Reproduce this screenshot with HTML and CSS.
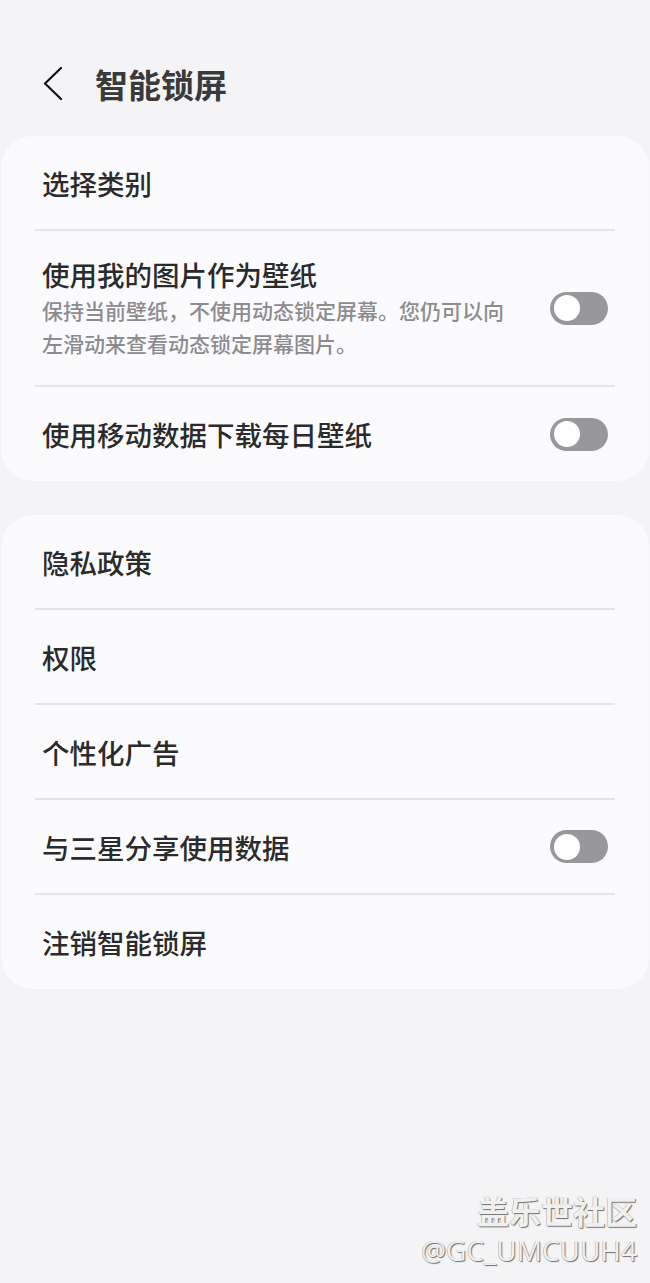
FILE: index.html
```html
<!DOCTYPE html>
<html lang="zh-CN">
<head>
  <meta charset="UTF-8">
  <meta name="viewport" content="width=device-width, initial-scale=1.0">
  <title>智能锁屏</title>
  <link rel="stylesheet" href="styles.css">
</head>
<body>

  <div class="header">
    <svg class="back" width="20" height="34" viewBox="0 0 20 34">
      <polyline points="18,1 2,16.5 18,32" fill="none" stroke="#111" stroke-width="2.2" stroke-linecap="round" stroke-linejoin="round"/>
    </svg>
    <h1>智能锁屏</h1>
  </div>

  <div class="card">
    <div class="row">
      <span class="label">选择类别</span>
    </div>
    <div class="row tall">
      <div class="text">
        <span class="label">使用我的图片作为壁纸</span>
        <p class="sub">保持当前壁纸，不使用动态锁定屏幕。您仍可以向左滑动来查看动态锁定屏幕图片。</p>
      </div>
      <div class="toggle"><span class="knob"></span></div>
    </div>
    <div class="row last">
      <span class="label">使用移动数据下载每日壁纸</span>
      <div class="toggle"><span class="knob"></span></div>
    </div>
  </div>

  <div class="card">
    <div class="row"><span class="label">隐私政策</span></div>
    <div class="row"><span class="label">权限</span></div>
    <div class="row"><span class="label">个性化广告</span></div>
    <div class="row">
      <span class="label">与三星分享使用数据</span>
      <div class="toggle"><span class="knob"></span></div>
    </div>
    <div class="row last"><span class="label">注销智能锁屏</span></div>
  </div>

  <div class="watermark">
    <div class="wm-title">盖乐世社区</div>
    <div class="wm-user">@GC_UMCUUH4</div>
  </div>

</body>
</html>
```
FILE: styles.css
```css
body {
  margin: 0;
  height: 1283px;
  position: relative;
  overflow: hidden;
  background-color: #f4f4f7;
  font-family: "Noto Sans CJK SC", "Noto Sans", sans-serif;
  color: #2b2b2b;
}
.header {
  height: 136px;
  display: flex;
  align-items: center;
  padding: 32px 0 0 43px;
  box-sizing: border-box;
}
.back {
  display: block;
}
h1 {
  margin: 0 0 0 32px;
  font-size: 33px;
  font-weight: 700;
  color: #3a3a3a;
  line-height: 1;
}
.card {
  background-color: #fbfbfd;
  border-radius: 32px;
  padding: 0 34px;
  margin: 0 1px 34px;
}
.row {
  display: flex;
  align-items: center;
  justify-content: space-between;
  min-height: 93px;
  padding: 0 7px 0 7px;
  border-bottom: 2px solid #e4e4e8;
}
.row.last {
  border-bottom: none;
  min-height: 94px;
}
.row.tall {
  padding-top: 25px;
  padding-bottom: 25px;
  align-items: center;
}
.label {
  font-size: 27.5px;
  font-weight: 500;
  line-height: 36px;
  color: #2b2b2b;
}
.text {
  width: 470px;
}
.sub {
  margin: 2px 0 0;
  font-size: 21px;
  line-height: 33px;
  font-weight: 500;
  color: #8c8c8f;
}
.toggle {
  width: 58px;
  height: 33px;
  border-radius: 17px;
  background-color: #98989c;
  position: relative;
  flex-shrink: 0;
}
.knob {
  position: absolute;
  left: 4px;
  top: 3.5px;
  width: 26px;
  height: 26px;
  border-radius: 50%;
  background-color: #fff;
}
.watermark {
  position: absolute;
  right: 13px;
  bottom: 13px;
  text-align: right;
  color: #f0f0f0;
  text-shadow: 1px 1px 1px #6e6e6e, -0.5px -0.5px 0 #b0b0b0;
}
.wm-title {
  font-size: 32px;
  font-weight: 700;
  line-height: 40px;
}
.wm-user {
  font-family: "Open Sans", "Liberation Sans", sans-serif;
  font-size: 28px;
  line-height: 40px;
}
```
